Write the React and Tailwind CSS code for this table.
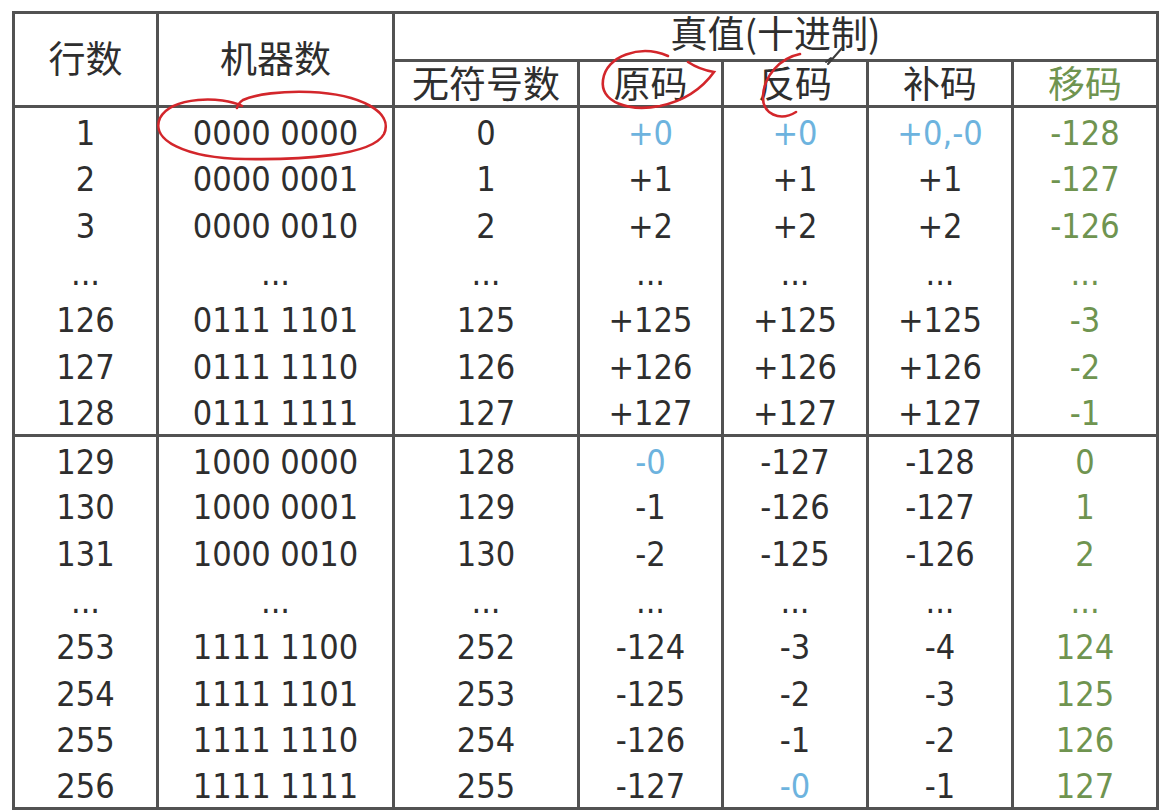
import React from "react";

const B = "blue";

const top = [
  ["1", "0000 0000", "0", ["+0", B], ["+0", B], ["+0,-0", B], "-128"],
  ["2", "0000 0001", "1", "+1", "+1", "+1", "-127"],
  ["3", "0000 0010", "2", "+2", "+2", "+2", "-126"],
  ["...", "...", "...", "...", "...", "...", "..."],
  ["126", "0111 1101", "125", "+125", "+125", "+125", "-3"],
  ["127", "0111 1110", "126", "+126", "+126", "+126", "-2"],
  ["128", "0111 1111", "127", "+127", "+127", "+127", "-1"],
];

const bottom = [
  ["129", "1000 0000", "128", ["-0", B], "-127", "-128", "0"],
  ["130", "1000 0001", "129", "-1", "-126", "-127", "1"],
  ["131", "1000 0010", "130", "-2", "-125", "-126", "2"],
  ["...", "...", "...", "...", "...", "...", "..."],
  ["253", "1111 1100", "252", "-124", "-3", "-4", "124"],
  ["254", "1111 1101", "253", "-125", "-2", "-3", "125"],
  ["255", "1111 1110", "254", "-126", "-1", "-2", "126"],
  ["256", "1111 1111", "255", "-127", ["-0", B], "-1", "127"],
];

function Cell({ v, idx, first }) {
  let text = v;
  let color = "text-[#2e2e2e]";
  if (Array.isArray(v)) {
    text = v[0];
    color = "text-[#6db3de]";
  } else if (idx === 6) {
    color = "text-[#6f9450]";
  }
  return (
    <td
      className={
        "border-x-[3px] border-[#525252] text-center align-middle px-0 pb-0 pt-[4px] leading-none " +
        color +
        (first ? " border-t-[3px]" : "")
      }
    >
      {text}
    </td>
  );
}

const th = "border-[3px] border-[#525252] font-normal p-0 leading-none";

export default function App() {
  return (
    <div className="w-[1162px] h-[811px] bg-white overflow-hidden relative">
      <div className="pt-[11px] pl-[12px]">
        <table
          className="table-fixed border-collapse border-[3px] border-[#525252] w-[1144px] text-[34px] font-stretch-condensed"
          style={{ fontFamily: "'DejaVu Sans', 'Noto Sans CJK SC', sans-serif" }}
        >
          <colgroup>
            <col className="w-[144px]" />
            <col className="w-[236px]" />
            <col className="w-[185px]" />
            <col className="w-[144px]" />
            <col className="w-[145px]" />
            <col className="w-[145px]" />
            <col className="w-[145px]" />
          </colgroup>
          <thead
            className="text-[37px] text-[#2e2e2e]"
            style={{ fontFamily: "'Noto Sans CJK SC', sans-serif" }}
          >
            <tr className="h-[46px]">
              <th rowSpan={2} className={th + " pb-[4px]"}>
                行数
              </th>
              <th rowSpan={2} className={th + " pb-[4px]"}>
                机器数
              </th>
              <th colSpan={5} className={th + " pb-[8px] pr-0"}>
                真值(十进制)
              </th>
            </tr>
            <tr className="h-[46px]">
              <th className={th + " pb-[2px]"}>无符号数</th>
              <th className={th + " pb-[2px]"}>原码</th>
              <th className={th + " pb-[2px]"}>反码</th>
              <th className={th + " pb-[2px]"}>补码</th>
              <th className={th + " pb-[2px] text-[#6f9450]"}>移码</th>
            </tr>
          </thead>
          <tbody>
            {top.map((r, i) => (
              <tr key={"t" + i} className="h-[47px]">
                {r.map((v, j) => (
                  <Cell key={j} v={v} idx={j} />
                ))}
              </tr>
            ))}
            {bottom.map((r, i) => (
              <tr key={"b" + i} className="h-[46.6px]">
                {r.map((v, j) => (
                  <Cell key={j} v={v} idx={j} first={i === 0} />
                ))}
              </tr>
            ))}
          </tbody>
        </table>
      </div>

      <svg
        className="absolute left-0 top-0 pointer-events-none"
        width="1162"
        height="811"
        viewBox="0 0 1162 811"
        fill="none"
      >
        <path
          d="M242 106 C222 96 172 96 160 118 C150 140 185 158 245 159 C300 160 372 156 384 134 C394 112 360 94 310 92 C282 91 256 94 243 100 C240 102 238 104 237 108"
          stroke="#d3262b"
          strokeWidth="2.6"
          strokeLinecap="round"
        />
        <path
          d="M668 56 C640 44 606 56 603 80 C600 102 628 112 660 106 C688 100 704 86 714 72 C702 70 694 66 688 62"
          stroke="#d3262b"
          strokeWidth="2.6"
          strokeLinecap="round"
        />
        <path
          d="M800 54 C780 58 764 76 763 96 C762 114 780 122 796 112"
          stroke="#d3262b"
          strokeWidth="2.6"
          strokeLinecap="round"
        />
        <path
          d="M828 64 L842 48 M826 62 L831 58"
          stroke="#3c3c3c"
          strokeWidth="2"
          strokeLinecap="round"
        />
      </svg>
    </div>
  );
}
